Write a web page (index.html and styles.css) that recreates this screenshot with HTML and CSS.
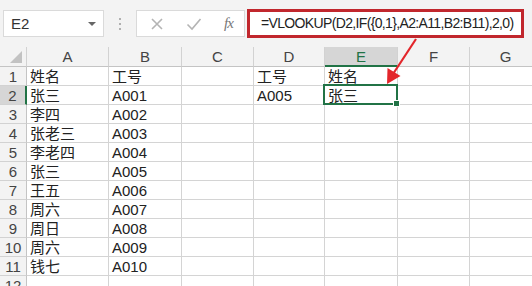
FILE: index.html
```html
<!DOCTYPE html>
<html lang="zh-CN">
<head>
  <meta charset="UTF-8" />
  <title>VLOOKUP</title>
  <link rel="stylesheet" href="styles.css">
</head>
<body>
  <!-- Formelleiste -->
  <div class="toolbar">
    <div class="name-box">
      <span>E2</span>
      <span class="caret"></span>
    </div>
    <div class="grip"><i></i><i></i><i></i></div>
    <div class="fx-buttons">
      <svg class="btn-icon" width="14" height="14" viewBox="0 0 14 14">
        <path d="M2 2 L12 12 M12 2 L2 12" stroke="#b4b4b4" stroke-width="1.6" fill="none"/>
      </svg>
      <svg class="btn-icon" width="16" height="14" viewBox="0 0 16 14">
        <path d="M1.5 7.5 L6 12 L14.5 2" stroke="#b4b4b4" stroke-width="1.6" fill="none"/>
      </svg>
      <span class="fx">fx</span>
    </div>
    <div class="formula">=VLOOKUP(D2,IF({0,1},A2:A11,B2:B11),2,0)</div>
  </div>

  <!-- Tabelle -->
  <div class="sheet">
    <div class="hd corner"><span class="tri"></span></div>
    <div class="hd">A</div>
    <div class="hd">B</div>
    <div class="hd">C</div>
    <div class="hd">D</div>
    <div class="hd active-col">E</div>
    <div class="hd">F</div>
    <div class="hd">G</div>

    <div class="rh">1</div><div class="c">姓名</div><div class="c">工号</div><div class="c"></div><div class="c">工号</div><div class="c">姓名</div><div class="c"></div><div class="c"></div>
    <div class="rh active-row">2</div><div class="c">张三</div><div class="c">A001</div><div class="c"></div><div class="c">A005</div><div class="c selected">张三<span class="handle"></span></div><div class="c"></div><div class="c"></div>
    <div class="rh">3</div><div class="c">李四</div><div class="c">A002</div><div class="c"></div><div class="c"></div><div class="c"></div><div class="c"></div><div class="c"></div>
    <div class="rh">4</div><div class="c">张老三</div><div class="c">A003</div><div class="c"></div><div class="c"></div><div class="c"></div><div class="c"></div><div class="c"></div>
    <div class="rh">5</div><div class="c">李老四</div><div class="c">A004</div><div class="c"></div><div class="c"></div><div class="c"></div><div class="c"></div><div class="c"></div>
    <div class="rh">6</div><div class="c">张三</div><div class="c">A005</div><div class="c"></div><div class="c"></div><div class="c"></div><div class="c"></div><div class="c"></div>
    <div class="rh">7</div><div class="c">王五</div><div class="c">A006</div><div class="c"></div><div class="c"></div><div class="c"></div><div class="c"></div><div class="c"></div>
    <div class="rh">8</div><div class="c">周六</div><div class="c">A007</div><div class="c"></div><div class="c"></div><div class="c"></div><div class="c"></div><div class="c"></div>
    <div class="rh">9</div><div class="c">周日</div><div class="c">A008</div><div class="c"></div><div class="c"></div><div class="c"></div><div class="c"></div><div class="c"></div>
    <div class="rh">10</div><div class="c">周六</div><div class="c">A009</div><div class="c"></div><div class="c"></div><div class="c"></div><div class="c"></div><div class="c"></div>
    <div class="rh">11</div><div class="c">钱七</div><div class="c">A010</div><div class="c"></div><div class="c"></div><div class="c"></div><div class="c"></div><div class="c"></div>
    <div class="rh">12</div><div class="c"></div><div class="c"></div><div class="c"></div><div class="c"></div><div class="c"></div><div class="c"></div><div class="c"></div>
  </div>

  <!-- roter Pfeil -->
  <svg class="arrow" width="532" height="286" viewBox="0 0 532 286">
    <line x1="416" y1="39" x2="393" y2="74" stroke="#e3262b" stroke-width="2.2"/>
    <polygon points="387,84 387.5,68 400.5,76" fill="#e3262b"/>
  </svg>
</body>
</html>
```

FILE: styles.css
```css
html, body {
  margin: 0;
  width: 532px;
  height: 286px;
  overflow: hidden;
  background: #fff;
  font-family: 'Liberation Sans', 'Noto Sans CJK SC', sans-serif;
  color: #222;
}

/* Formelleiste */
.toolbar {
  height: 47px;
  background: #f3f3f3;
  display: flex;
  align-items: flex-start;
  padding: 10px 0 0 3px;
  box-sizing: border-box;
}

.name-box {
  width: 101px;
  height: 27px;
  box-sizing: border-box;
  background: #fff;
  border: 1px solid #dadada;
  display: flex;
  align-items: center;
  justify-content: space-between;
  padding: 0 7px 0 7px;
  font-size: 15px;
  color: #333;
}

.caret {
  width: 0;
  height: 0;
  border-left: 4px solid transparent;
  border-right: 4px solid transparent;
  border-top: 4px solid #666;
}

.grip {
  width: 32px;
  height: 27px;
  display: flex;
  flex-direction: column;
  align-items: center;
  justify-content: center;
  gap: 3px;
}

.grip i {
  width: 2px;
  height: 2px;
  background: #b0b0b0;
}

.fx-buttons {
  width: 109px;
  height: 27px;
  box-sizing: border-box;
  background: #fff;
  border: 1px solid #dadada;
  display: flex;
  align-items: center;
  padding-left: 13px;
  gap: 22px;
}

.fx {
  font-family: 'Liberation Serif', serif;
  font-style: italic;
  font-size: 15px;
  color: #777;
  letter-spacing: -1px;
}

.formula {
  margin-left: 2px;
  width: 277px;
  height: 29px;
  margin-top: -1px;
  box-sizing: border-box;
  border: 3px solid #c1272d;
  background: #fff;
  padding-left: 11px;
  font-size: 14px;
  letter-spacing: -0.65px;
  line-height: 23px;
  color: #222;
  white-space: nowrap;
  overflow: hidden;
}

/* Tabelle */
.sheet {
  display: grid;
  grid-template-columns: 27px 82px 73px 72px 71px 73px 72px 72px;
  grid-template-rows: 20px repeat(12, 19px);
}

.hd {
  background: #f3f3f3;
  border-right: 1px solid #d2d2d2;
  border-bottom: 1px solid #c4c4c4;
  box-sizing: border-box;
  text-align: center;
  font-size: 15px;
  line-height: 19px;
  color: #444;
}

.corner {
  position: relative;
}

.tri {
  position: absolute;
  right: 4px;
  bottom: 3px;
  width: 0;
  height: 0;
  border-left: 12px solid transparent;
  border-bottom: 12px solid #c2c2c2;
}

.active-col {
  background: #d6d6d6;
  color: #217346;
  border-bottom: 2px solid #217346;
}

.rh {
  background: #f3f3f3;
  border-right: 1px solid #c4c4c4;
  border-bottom: 1px solid #d2d2d2;
  box-sizing: border-box;
  text-align: center;
  font-size: 15px;
  line-height: 19px;
  color: #444;
}

.active-row {
  background: #d6d6d6;
  border-right: 2px solid #217346;
}

.c {
  border-right: 1px solid #d4d4d4;
  border-bottom: 1px solid #d4d4d4;
  box-sizing: border-box;
  padding-left: 3px;
  font-size: 15px;
  line-height: 19px;
  white-space: nowrap;
  overflow: hidden;
  color: #222;
}

.selected {
  position: relative;
  overflow: visible;
}

.selected::after {
  content: "";
  position: absolute;
  top: -2px;
  left: -2px;
  right: -1px;
  bottom: -1px;
  border: 2px solid #217346;
}

.handle {
  position: absolute;
  right: -3px;
  bottom: -3px;
  width: 5px;
  height: 5px;
  background: #217346;
  border: 1px solid #fff;
  z-index: 2;
}

.arrow {
  position: absolute;
  left: 0;
  top: 0;
  pointer-events: none;
}
```
